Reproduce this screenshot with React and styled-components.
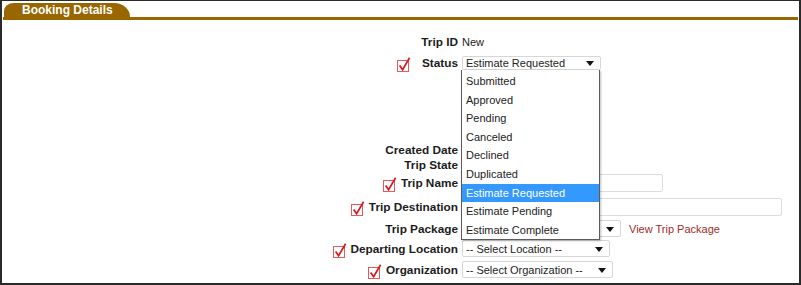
import styled, { createGlobalStyle } from "styled-components";

const GlobalStyle = createGlobalStyle`
  html, body {
    margin: 0;
    padding: 0;
    background: #fff;
  }
  body {
    font-family: "Liberation Sans", Arial, sans-serif;
    font-size: 11px;
    color: #222;
  }
`;

const Frame = styled.div`
  width: 801px;
  height: 285px;
  box-sizing: border-box;
  border: 2px solid #2a2a2a;
  border-top-width: 1px;
  overflow: hidden;
`;

const TabBar = styled.div`
  margin: 2px 1px 0 1px;
  padding-left: 1px;
  border-bottom: 3px solid #996600;
  display: flex;
`;

const Tab = styled.div`
  height: 14px;
  width: 126px;
  background: #996600;
  border-radius: 10px 16px 0 0 / 8px 14px 0 0;
  color: #fff;
  font-weight: bold;
  font-size: 12px;
  line-height: 15px;
  padding-left: 18px;
  box-sizing: border-box;
`;

const Form = styled.div`
  padding-top: 12px;
  display: flex;
  flex-direction: column;
`;

const Row = styled.div`
  display: flex;
  align-items: center;
  height: ${(p) => p.$h}px;
`;

const Spacer = styled.div`
  height: ${(p) => p.$h}px;
`;

const LabelCell = styled.div`
  width: 456px;
  display: flex;
  justify-content: flex-end;
  align-items: center;
  gap: ${(p) => p.$gap ?? 4}px;
`;

const Label = styled.span`
  font-weight: bold;
  font-size: 11.8px;
  color: #1c1c1c;
`;

const ValueCell = styled.div`
  margin-left: 4px;
  display: flex;
  align-items: center;
  gap: 8px;
  position: relative;
`;

const Value = styled.span`
  font-size: 11px;
  color: #222;
`;

const SelectWrap = styled.div`
  position: relative;
  z-index: ${(p) => (p.$open ? 5 : 1)};
`;

const SelectBox = styled.div`
  width: ${(p) => p.$w}px;
  height: ${(p) => p.$hgt ?? 17}px;
  box-sizing: border-box;
  border: 1px solid #d6d6d6;
  border-radius: 2px;
  background: #fff;
  display: flex;
  align-items: center;
  padding-left: 3px;
  font-size: 11px;
  color: #222;
  position: relative;

  &::after {
    content: "";
    position: absolute;
    right: 6px;
    top: 50%;
    margin-top: -2px;
    border-left: 4px solid transparent;
    border-right: 4px solid transparent;
    border-top: 5px solid #111;
  }
`;

const List = styled.ul`
  position: absolute;
  left: -1px;
  top: 100%;
  margin: 0;
  padding: 2px 0 0 0;
  list-style: none;
  width: 139px;
  box-sizing: border-box;
  background: #fff;
  border: 1px solid #5a5a5a;
  border-top: none;
  box-shadow: 1px 1px 2px rgba(0, 0, 0, 0.25);
`;

const Option = styled.li`
  height: 18.6px;
  line-height: 18.6px;
  padding-left: 4px;
  font-size: 11px;
  color: ${(p) => (p.$active ? "#fff" : "#222")};
  background: ${(p) => (p.$active ? "#3399ff" : "transparent")};
`;

const TextInput = styled.input`
  width: ${(p) => p.$w}px;
  height: 18px;
  box-sizing: border-box;
  border: 1px solid #dcdcdc;
  border-radius: 2px;
  padding: 0 3px;
  font-family: inherit;
  font-size: 11px;
  outline: none;
`;

const Link = styled.a`
  color: #a02c2c;
  font-size: 11px;
  text-decoration: none;
`;

const CheckIcon = styled.svg`
  flex: none;
  margin-top: 3px;
`;

function Required() {
  return (
    <CheckIcon width="14" height="15" viewBox="0 0 14 15">
      <rect x="0.5" y="3.5" width="11" height="11" fill="#fff" stroke="#e8585c" />
      <path d="M2.6 8.6 L5.6 12.6 L12.6 0.8" stroke="#d8161e" strokeWidth="1.7" fill="none" />
    </CheckIcon>
  );
}

const statuses = [
  "Submitted",
  "Approved",
  "Pending",
  "Canceled",
  "Declined",
  "Duplicated",
  "Estimate Requested",
  "Estimate Pending",
  "Estimate Complete",
];

function FieldRow({ h, label, required, gap, children }) {
  return (
    <Row $h={h}>
      <LabelCell $gap={gap}>
        {required && <Required />}
        <Label>{label}</Label>
      </LabelCell>
      <ValueCell>{children}</ValueCell>
    </Row>
  );
}

export default function App() {
  const current = "Estimate Requested";
  return (
    <>
      <GlobalStyle />
      <Frame>
        <TabBar>
          <Tab>Booking Details</Tab>
        </TabBar>
        <Form>
          <FieldRow h={20} label="Trip ID">
            <Value>New</Value>
          </FieldRow>
          <FieldRow h={22} label="Status" required gap={11}>
            <SelectWrap $open>
              <SelectBox $w={139} $hgt={14}>{current}</SelectBox>
              <List>
                {statuses.map((s) => (
                  <Option key={s} $active={s === current}>
                    {s}
                  </Option>
                ))}
              </List>
            </SelectWrap>
          </FieldRow>
          <Spacer $h={68} />
          <FieldRow h={15} label="Created Date" />
          <FieldRow h={15} label="Trip State" />
          <FieldRow h={22} label="Trip Name" required>
            <TextInput $w={201} />
          </FieldRow>
          <FieldRow h={25} label="Trip Destination" required>
            <TextInput $w={320} />
          </FieldRow>
          <FieldRow h={19} label="Trip Package">
            <SelectWrap>
              <SelectBox $w={159} />
            </SelectWrap>
            <Link href="#">View Trip Package</Link>
          </FieldRow>
          <FieldRow h={21} label="Departing Location" required>
            <SelectWrap>
              <SelectBox $w={148}>-- Select Location --</SelectBox>
            </SelectWrap>
          </FieldRow>
          <FieldRow h={21} label="Organization" required>
            <SelectWrap>
              <SelectBox $w={151}>-- Select Organization --</SelectBox>
            </SelectWrap>
          </FieldRow>
        </Form>
      </Frame>
    </>
  );
}
